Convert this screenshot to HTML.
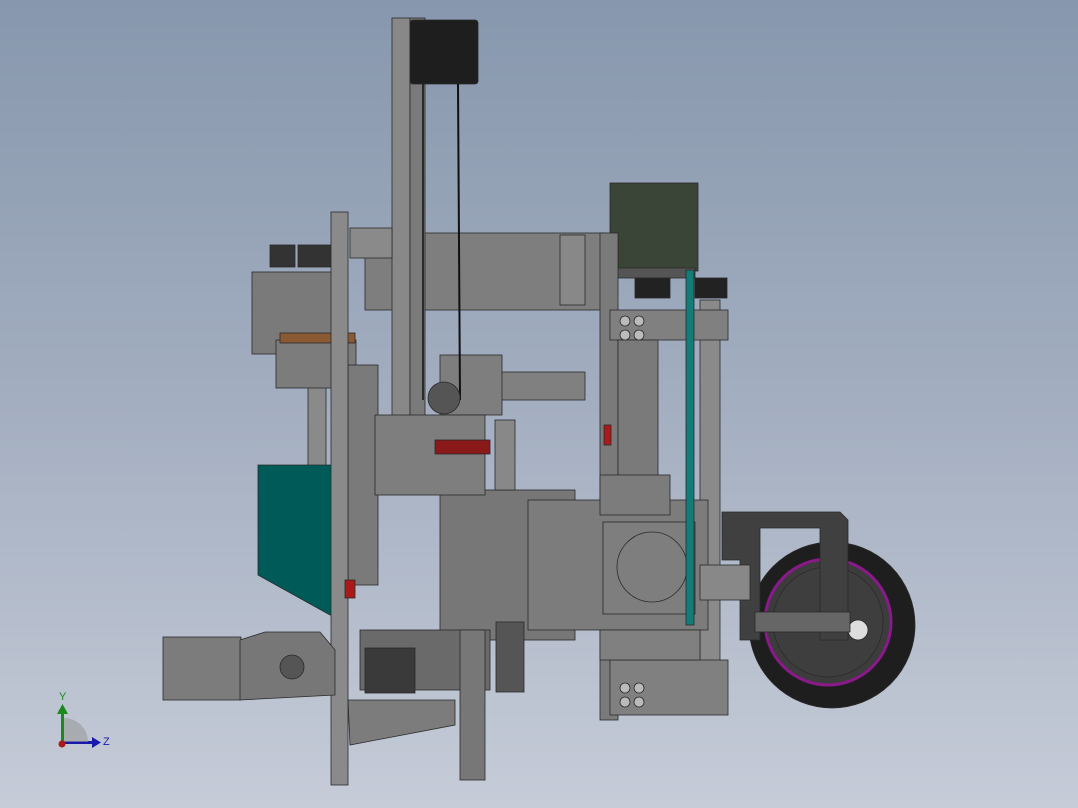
<!DOCTYPE html>
<html><head><style>
html,body{margin:0;padding:0;width:1078px;height:808px;overflow:hidden}
body{background:linear-gradient(#8797ad 0%,#a3aec0 50%,#c6ccd8 100%)}
svg{position:absolute;left:0;top:0}
</style></head><body>
<svg width="1078" height="808" viewBox="0 0 1078 808" stroke="#2a2a2a" stroke-width="0.8">
<!-- rods -->
<rect x="308" y="280" width="18" height="190" fill="#8a8a8a"/>
<rect x="700" y="300" width="20" height="390" fill="#8a8a8a"/>
<!-- left motor upper -->
<rect x="252" y="272" width="82" height="82" fill="#7a7a7a"/>
<rect x="276" y="340" width="80" height="48" fill="#7c7c7c"/>
<rect x="280" y="333" width="75" height="10" fill="#8a5a33"/>
<rect x="270" y="245" width="25" height="22" fill="#333"/>
<rect x="298" y="245" width="35" height="22" fill="#333"/>
<!-- teal block left -->
<polygon points="258,465 335,465 335,615 330,615 258,575" fill="#005a58"/>
<!-- top beam -->
<rect x="365" y="233" width="240" height="77" fill="#7e7e7e"/>
<rect x="560" y="235" width="25" height="70" fill="#888"/>
<!-- green motor -->
<rect x="610" y="183" width="88" height="88" fill="#3a4437"/>
<rect x="615" y="268" width="80" height="10" fill="#555"/>
<rect x="635" y="278" width="35" height="20" fill="#222"/>
<rect x="695" y="278" width="32" height="20" fill="#222"/>
<!-- right plate -->
<rect x="600" y="233" width="18" height="487" fill="#7a7a7a"/>
<rect x="610" y="310" width="118" height="30" fill="#808080"/>
<rect x="610" y="660" width="118" height="55" fill="#808080"/>
<rect x="618" y="340" width="40" height="140" fill="#7a7a7a"/>
<!-- right side mid pieces -->
<rect x="490" y="372" width="95" height="28" fill="#808080"/>
<rect x="440" y="355" width="62" height="60" fill="#7e7e7e"/>
<!-- center box -->
<rect x="440" y="490" width="135" height="150" fill="#777"/>
<rect x="528" y="500" width="180" height="130" fill="#7c7c7c"/>
<rect x="600" y="475" width="70" height="40" fill="#7c7c7c"/>
<rect x="603" y="522" width="92" height="92" fill="#7e7e7e"/>
<circle cx="652" cy="567" r="35" fill="#7e7e7e"/>
<rect x="600" y="630" width="100" height="30" fill="#808080"/>
<!-- teal vertical -->
<rect x="686" y="270" width="8" height="355" fill="#127c78"/>
<!-- wheel -->
<circle cx="832" cy="625" r="83" fill="#1e1e1e"/>
<circle cx="828" cy="622" r="63" fill="#3c3c3c" stroke="#8a1a8a" stroke-width="3"/>
<circle cx="828" cy="622" r="55" fill="#3e3e3e"/>
<circle cx="858" cy="630" r="10" fill="#ddd"/>
<polygon points="722,512 840,512 848,520 848,640 820,640 820,528 760,528 760,640 740,640 740,560 722,560" fill="#404040"/>
<rect x="755" y="612" width="95" height="20" fill="#666"/>
<rect x="700" y="565" width="50" height="35" fill="#888"/>
<!-- tall column -->
<rect x="392" y="18" width="18" height="400" fill="#888"/>
<rect x="410" y="18" width="15" height="400" fill="#7a7a7a"/>
<rect x="410" y="20" width="68" height="64" rx="3" fill="#1e1e1e"/>
<line x1="458" y1="84" x2="460" y2="400" stroke="#111" stroke-width="2"/>
<line x1="423" y1="84" x2="423" y2="400" stroke="#111" stroke-width="1.5"/>
<circle cx="444" cy="398" r="16" fill="#555"/>
<rect x="350" y="228" width="42" height="30" fill="#8a8a8a"/>
<!-- carriage parts -->
<rect x="348" y="365" width="30" height="220" fill="#7a7a7a"/>
<rect x="375" y="415" width="110" height="80" fill="#7e7e7e"/>
<rect x="435" y="440" width="55" height="14" fill="#8a1a1a"/>
<rect x="495" y="420" width="20" height="70" fill="#888"/>
<!-- main vertical plate -->
<rect x="331" y="212" width="17" height="573" fill="#8a8a8a"/>
<!-- lower left motor -->
<rect x="163" y="637" width="78" height="63" fill="#7c7c7c"/>
<polygon points="240,640 265,632 320,632 335,650 335,695 240,700" fill="#777"/>
<circle cx="292" cy="667" r="12" fill="#555"/>
<!-- lower assemblies -->
<rect x="360" y="630" width="130" height="60" fill="#6a6a6a"/>
<rect x="365" y="648" width="50" height="45" fill="#3a3a3a"/>
<polygon points="348,700 455,700 455,725 350,745" fill="#7c7c7c"/>
<rect x="460" y="630" width="25" height="150" fill="#777"/>
<rect x="496" y="622" width="28" height="70" fill="#555"/>
<rect x="345" y="580" width="10" height="18" fill="#aa1a1a"/>
<rect x="604" y="425" width="7" height="20" fill="#aa1a1a"/>
<!-- holes -->
<g fill="#bbb"><circle cx="625" cy="321" r="5"/><circle cx="639" cy="321" r="5"/><circle cx="625" cy="335" r="5"/><circle cx="639" cy="335" r="5"/>
<circle cx="625" cy="688" r="5"/><circle cx="639" cy="688" r="5"/><circle cx="625" cy="702" r="5"/><circle cx="639" cy="702" r="5"/></g>
<!-- axes -->
<g stroke="none"><rect x="61" y="712" width="3" height="32" fill="#1a8a1a"/><polygon points="57,714 68,714 62.5,704" fill="#1a8a1a"/>
<rect x="62" y="741" width="32" height="3" fill="#1a1aaa"/><polygon points="92,737 92,748 101,742.5" fill="#1a1aaa"/>
<path d="M64 718 A24 24 0 0 1 88 742 L64 742Z" fill="#999" opacity="0.6"/><circle cx="62" cy="744" r="3.5" fill="#aa1a1a"/></g>
<text x="59" y="700" font-family="Liberation Sans" font-size="11" fill="#1a8a1a" stroke="none">Y</text>
<text x="103" y="745" font-family="Liberation Sans" font-size="11" fill="#1a1aaa" stroke="none">Z</text>
</svg>
</body></html>
